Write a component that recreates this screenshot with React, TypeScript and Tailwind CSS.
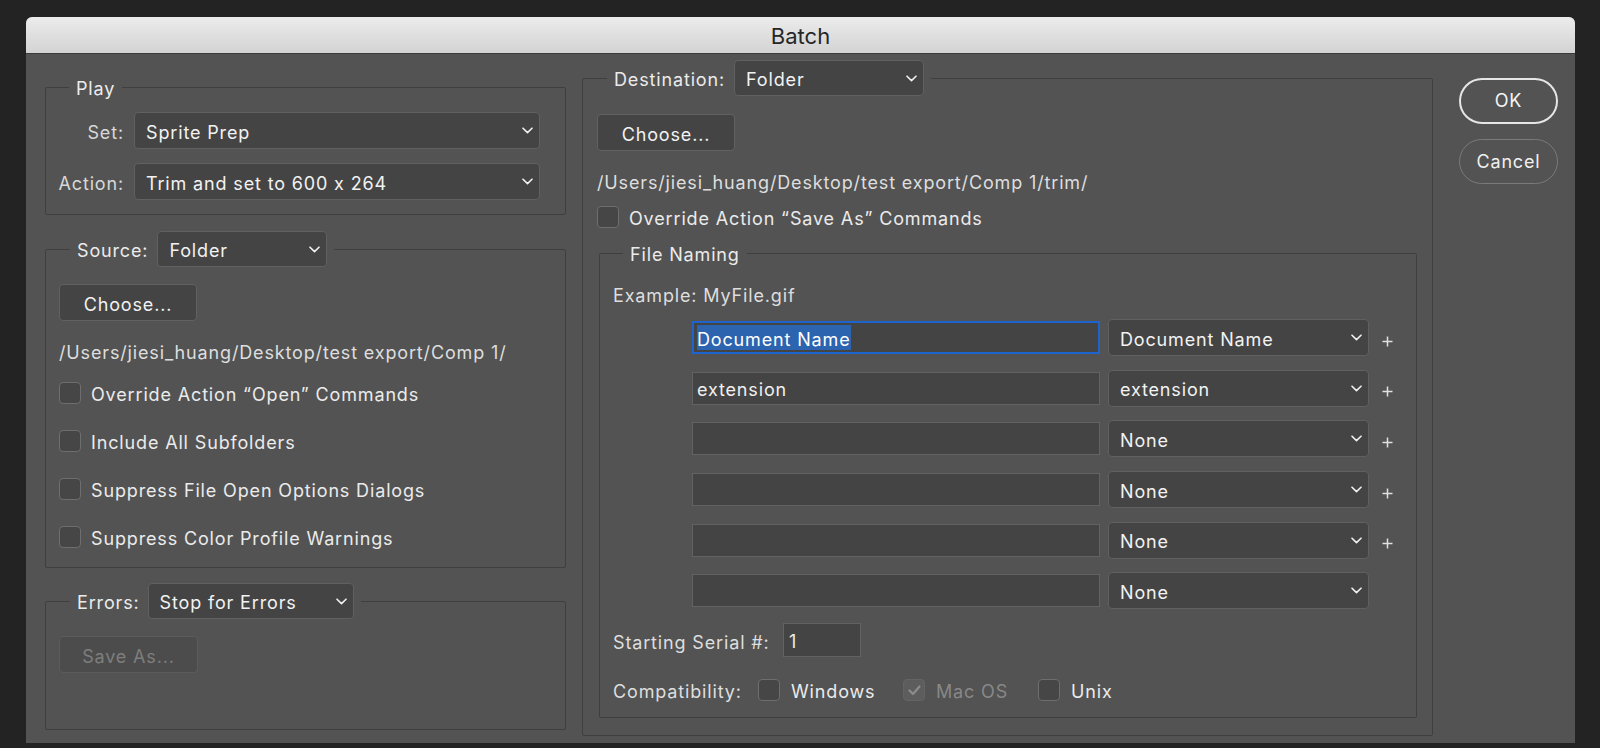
import React from "react";

const T = "block pt-[4px] leading-[18px] whitespace-nowrap";

function Chevron() {
  return (
    <svg width="11" height="7" viewBox="0 0 11 7" className="shrink-0">
      <path d="M1 1.2 L5.5 5.6 L10 1.2" fill="none" stroke="#f0f0f0" strokeWidth="1.6" strokeLinecap="round" strokeLinejoin="round" />
    </svg>
  );
}

function Plus() {
  return (
    <svg width="11" height="11" viewBox="0 0 11 11" className="shrink-0">
      <path d="M5.5 0.5 V10.5 M0.5 5.5 H10.5" fill="none" stroke="#e0e0e0" strokeWidth="1.5" />
    </svg>
  );
}

function Select({ value, className }: { value: string; className: string }) {
  return (
    <div
      className={
        "flex items-center justify-between rounded-[4px] border border-[#606060] bg-[#444444] pl-[11px] pr-[6px] text-[#f2f2f2] " +
        className
      }
    >
      <span className={T}>{value}</span>
      <Chevron />
    </div>
  );
}

function Checkbox() {
  return <span className="block h-[22px] w-[22px] shrink-0 rounded-[4px] border border-[#6e6e6e] bg-[#464646]" />;
}

function CheckRow({ label }: { label: string }) {
  return (
    <div className="flex h-[22px] items-center gap-[10px]">
      <Checkbox />
      <span className={T}>{label}</span>
    </div>
  );
}

function Button({ label, className }: { label: string; className: string }) {
  return (
    <div
      className={
        "flex h-[37px] items-center justify-center rounded-[4px] border border-[#616161] bg-[#444444] text-[#f2f2f2] " +
        className
      }
    >
      <span className={T}>{label}</span>
    </div>
  );
}

function NameRow({
  text,
  sel,
  focused,
  plus,
}: {
  text: string;
  sel: string;
  focused?: boolean;
  plus?: boolean;
}) {
  return (
    <div className="flex h-[37px] items-center pl-[79px]">
      {focused ? (
        <div className="flex h-[33px] w-[408px] items-center border-2 border-[#1d64cf] bg-[#444444] pl-[3px]">
          <span className="block bg-[#2c64b0] pt-[5px] leading-[20px] text-white">{text}</span>
        </div>
      ) : (
        <div className="flex h-[33px] w-[408px] items-center border border-[#626262] bg-[#444444] pl-[4px] text-[#f0f0f0]">
          <span className={T}>{text}</span>
        </div>
      )}
      <Select value={sel} className="ml-[8px] h-[37px] w-[261px]" />
      <div className="ml-[13px] flex h-[37px] w-[11px] items-center pt-[7px]">{plus ? <Plus /> : null}</div>
    </div>
  );
}

export default function App() {
  return (
    <div className="h-[748px] w-full overflow-hidden bg-[#232323] pl-[26px] pt-[17px] text-[18px] tracking-[0.85px] text-[#ebebeb] [font-family:Inter,sans-serif] [font-variant-ligatures:no-contextual]">
      <div className="flex h-[726px] w-[1549px] flex-col overflow-hidden rounded-t-[6px] bg-[#535353]">
        {/* Title bar */}
        <div className="flex h-[37px] shrink-0 items-center justify-center border-b border-[#3a3a3a] bg-gradient-to-b from-[#ececec] to-[#d3d3d3]">
          <span className="block pt-[2px] text-[22px] leading-[26px] tracking-normal text-[#262626]">Batch</span>
        </div>

        {/* Body */}
        <div className="flex flex-1 pl-[19px] pt-[6px] pb-[7px]">
          {/* Left column */}
          <div className="mt-[16px] flex w-[521px] flex-col pb-[6px]">
            {/* Play */}
            <fieldset className="rounded-[2px] border border-[#3f3f3f]">
              <legend className="ml-[23px] px-[7px]">
                <span className={T}>Play</span>
              </legend>
              <div className="grid grid-cols-[69px_406px] gap-x-[10px] gap-y-[14px] pl-[9px] pr-[25px] pt-[14px] pb-[14px]">
                <div className="flex h-[37px] items-center justify-end text-[#d8d8d8]">
                  <span className={T}>Set:</span>
                </div>
                <Select value="Sprite Prep" className="h-[37px]" />
                <div className="flex h-[37px] items-center justify-end text-[#d8d8d8]">
                  <span className={T}>Action:</span>
                </div>
                <Select value="Trim and set to 600 x 264" className="h-[37px]" />
              </div>
            </fieldset>

            {/* Source */}
            <fieldset className="mt-[16px] rounded-[2px] border border-[#3f3f3f]">
              <legend className="ml-[24px] px-[7px]">
                <div className="flex items-center gap-[9px]">
                  <span className={T}>Source:</span>
                  <Select value="Folder" className="h-[36px] w-[170px]" />
                </div>
              </legend>
              <div className="flex flex-col pl-[13px] pt-[17px] pb-[19px]">
                <Button label="Choose..." className="w-[138px]" />
                <div className="mt-[19px] pt-[4px] leading-[18px] text-[#dedede]">/Users/jiesi_huang/Desktop/test export/Comp 1/</div>
                <div className="mt-[20px] flex flex-col gap-[26px]">
                  <CheckRow label="Override Action “Open” Commands" />
                  <CheckRow label="Include All Subfolders" />
                  <CheckRow label="Suppress File Open Options Dialogs" />
                  <CheckRow label="Suppress Color Profile Warnings" />
                </div>
              </div>
            </fieldset>

            {/* Errors */}
            <fieldset className="mt-[15px] flex-1 rounded-[2px] border border-[#3f3f3f]">
              <legend className="ml-[24px] px-[7px]">
                <div className="flex items-center gap-[8px]">
                  <span className={T}>Errors:</span>
                  <Select value="Stop for Errors" className="h-[36px] w-[206px]" />
                </div>
              </legend>
              <div className="pl-[13px] pt-[17px]">
                <div className="flex h-[37px] w-[139px] items-center justify-center rounded-[4px] border border-[#5b5b5b] bg-[#4c4c4c] text-[#7e7e7e]">
                  <span className={T}>Save As...</span>
                </div>
              </div>
            </fieldset>
          </div>

          {/* Right column */}
          <fieldset className="ml-[16px] flex w-[851px] flex-col rounded-[2px] border border-[#3f3f3f]">
            <legend className="ml-[24px] px-[7px]">
              <div className="flex items-center gap-[9px]">
                <span className={T}>Destination:</span>
                <Select value="Folder" className="h-[36px] w-[190px]" />
              </div>
            </legend>
            <div className="flex flex-col pl-[14px] pr-[15px] pt-[18px]">
              <Button label="Choose..." className="w-[138px]" />
              <div className="mt-[19px] pt-[4px] leading-[18px] text-[#dedede]">/Users/jiesi_huang/Desktop/test export/Comp 1/trim/</div>
              <div className="mt-[14px]">
                <CheckRow label="Override Action “Save As” Commands" />
              </div>

              {/* File Naming */}
              <fieldset className="ml-[2px] mt-[14px] rounded-[2px] border border-[#3f3f3f]">
                <legend className="ml-[23px] px-[7px]">
                  <span className={T}>File Naming</span>
                </legend>
                <div className="flex flex-col pl-[13px] pt-[19px] pb-[16px]">
                  <div className="pt-[4px] leading-[18px] text-[#dedede]">Example: MyFile.gif</div>
                  <div className="mt-[14px] flex flex-col gap-[13.7px]">
                    <NameRow text="Document Name" sel="Document Name" focused plus />
                    <NameRow text="extension" sel="extension" plus />
                    <NameRow text="" sel="None" plus />
                    <NameRow text="" sel="None" plus />
                    <NameRow text="" sel="None" plus />
                    <NameRow text="" sel="None" />
                  </div>
                  <div className="mt-[14px] flex h-[34px] items-center">
                    <span className="block w-[170px] pt-[6px] leading-[18px] text-[#dedede]">Starting Serial #:</span>
                    <div className="flex h-[34px] w-[78px] items-center border border-[#626262] bg-[#444444] pl-[5px]">
                      <span className={T}>1</span>
                    </div>
                  </div>
                  <div className="mt-[22px] flex h-[22px] items-center">
                    <span className="block w-[145px] pt-[4px] leading-[18px] text-[#dedede]">Compatibility:</span>
                    <div className="flex w-[145px] items-center gap-[11px]">
                      <Checkbox />
                      <span className={T}>Windows</span>
                    </div>
                    <div className="flex w-[135px] items-center gap-[11px]">
                      <span className="flex h-[22px] w-[22px] shrink-0 items-center justify-center rounded-[4px] border border-[#646464] bg-[#5d5d5d]">
                        <svg width="13" height="11" viewBox="0 0 13 11">
                          <path d="M1.5 5.5 L5 9 L11.5 1.5" fill="none" stroke="#8c8c8c" strokeWidth="2.2" strokeLinecap="round" strokeLinejoin="round" />
                        </svg>
                      </span>
                      <span className={T + " text-[#888888]"}>Mac OS</span>
                    </div>
                    <div className="flex items-center gap-[11px]">
                      <Checkbox />
                      <span className={T}>Unix</span>
                    </div>
                  </div>
                </div>
              </fieldset>
            </div>
          </fieldset>

          {/* Buttons */}
          <div className="ml-[26px] flex w-[99px] flex-col pt-[18px]">
            <div className="flex h-[46px] items-center justify-center rounded-full border-2 border-[#e6e6e6] text-[#f4f4f4]">
              <span className="block leading-[22px]">OK</span>
            </div>
            <div className="mt-[15px] flex h-[45px] items-center justify-center rounded-full border-[1.5px] border-[#7a7a7a] text-[#f0f0f0]">
              <span className="block leading-[22px]">Cancel</span>
            </div>
          </div>
        </div>
      </div>
    </div>
  );
}
